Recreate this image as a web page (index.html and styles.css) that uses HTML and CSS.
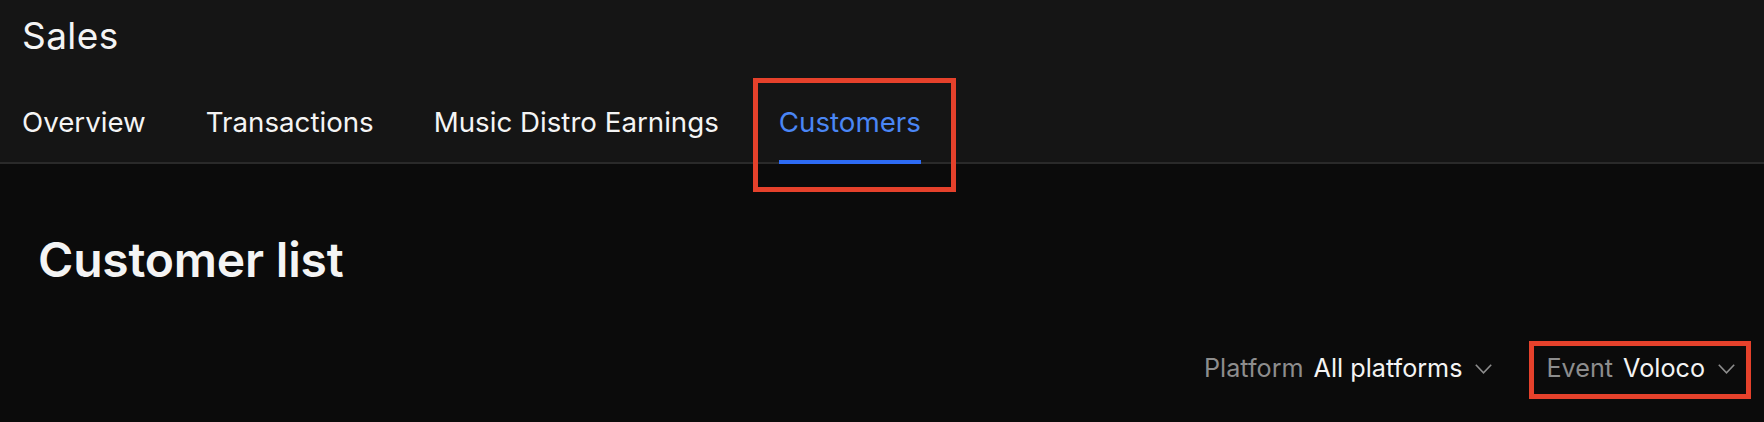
FILE: index.html
```html
<!DOCTYPE html>
<html lang="en">
<head>
<meta charset="utf-8">
<title>Sales</title>
<link rel="stylesheet" href="styles.css">
</head>
<body>
<header class="header">
  <h1 class="page-title">Sales</h1>
  <nav class="tabs">
    <a class="tab">Overview</a>
    <a class="tab">Transactions</a>
    <a class="tab">Music Distro Earnings</a>
    <a class="tab tab-active highlight-tab">Customers</a>
  </nav>
</header>
<main class="main">
  <h2 class="section-title">Customer list</h2>
  <div class="filters">
    <div class="filter">
      <span class="filter-label">Platform</span>
      <span class="filter-value">All platforms</span>
      <svg class="chevron" viewBox="0 0 17 10" width="17" height="10"><path d="M0.8 0.8 L8.5 8.8 L16.2 0.8" fill="none" stroke="#8d8d8d" stroke-width="1.6"/></svg>
    </div>
    <div class="filter highlight-filter">
      <span class="filter-label">Event</span>
      <span class="filter-value">Voloco</span>
      <svg class="chevron" viewBox="0 0 17 10" width="17" height="10"><path d="M0.8 0.8 L8.5 8.8 L16.2 0.8" fill="none" stroke="#8d8d8d" stroke-width="1.6"/></svg>
    </div>
  </div>
</main>
</body>
</html>
```

FILE: styles.css
```css
html, body {
  margin: 0;
  padding: 0;
}
body {
  background: #0b0b0b;
  font-family: Inter, "Noto Sans", sans-serif;
  color: #f4f4f4;
  width: 1764px;
  height: 422px;
  overflow: hidden;
}
.header {
  background: #151515;
  border-bottom: 2px solid #2a2a2a;
  padding: 18px 0 0 22px;
}
.page-title {
  margin: 0;
  font-size: 37px;
  line-height: 36px;
  font-weight: 400;
  letter-spacing: 0.4px;
}
.tabs {
  display: flex;
  gap: 60px;
  margin-top: 54px;
}
.tab {
  font-size: 27.7px;
  line-height: 28px;
  font-weight: 400;
  color: #f4f4f4;
  padding-bottom: 24px;
  border-bottom: 4px solid transparent;
  margin-bottom: -2px;
  letter-spacing: 0;
}
.tab-active {
  color: #4a86f5;
  border-bottom-color: #2d6bf5;
}
.highlight-tab {
  position: relative;
}
.highlight-tab::after {
  content: "";
  position: absolute;
  top: -30px;
  bottom: -32px;
  left: -26px;
  right: -35px;
  border: 5px solid #e5412b;
}
.main {
  padding: 72px 29px 0 38px;
}
.section-title {
  margin: 0;
  font-size: 48px;
  line-height: 48px;
  font-weight: 600;
  letter-spacing: -0.2px;
}
.filters {
  display: flex;
  justify-content: flex-end;
  gap: 54px;
  margin-top: 72px;
}
.filter {
  display: flex;
  align-items: center;
  font-size: 25.2px;
  line-height: 25px;
}
.filter-label {
  color: #8d8d8d;
  margin-right: 10px;
}
.filter-value {
  color: #f4f4f4;
  margin-right: 13px;
}
.chevron {
  display: block;
}
.highlight-filter {
  position: relative;
}
.highlight-filter::after {
  content: "";
  position: absolute;
  top: -15px;
  bottom: -18px;
  left: -17px;
  right: -16px;
  border: 5px solid #e5412b;
}
```
